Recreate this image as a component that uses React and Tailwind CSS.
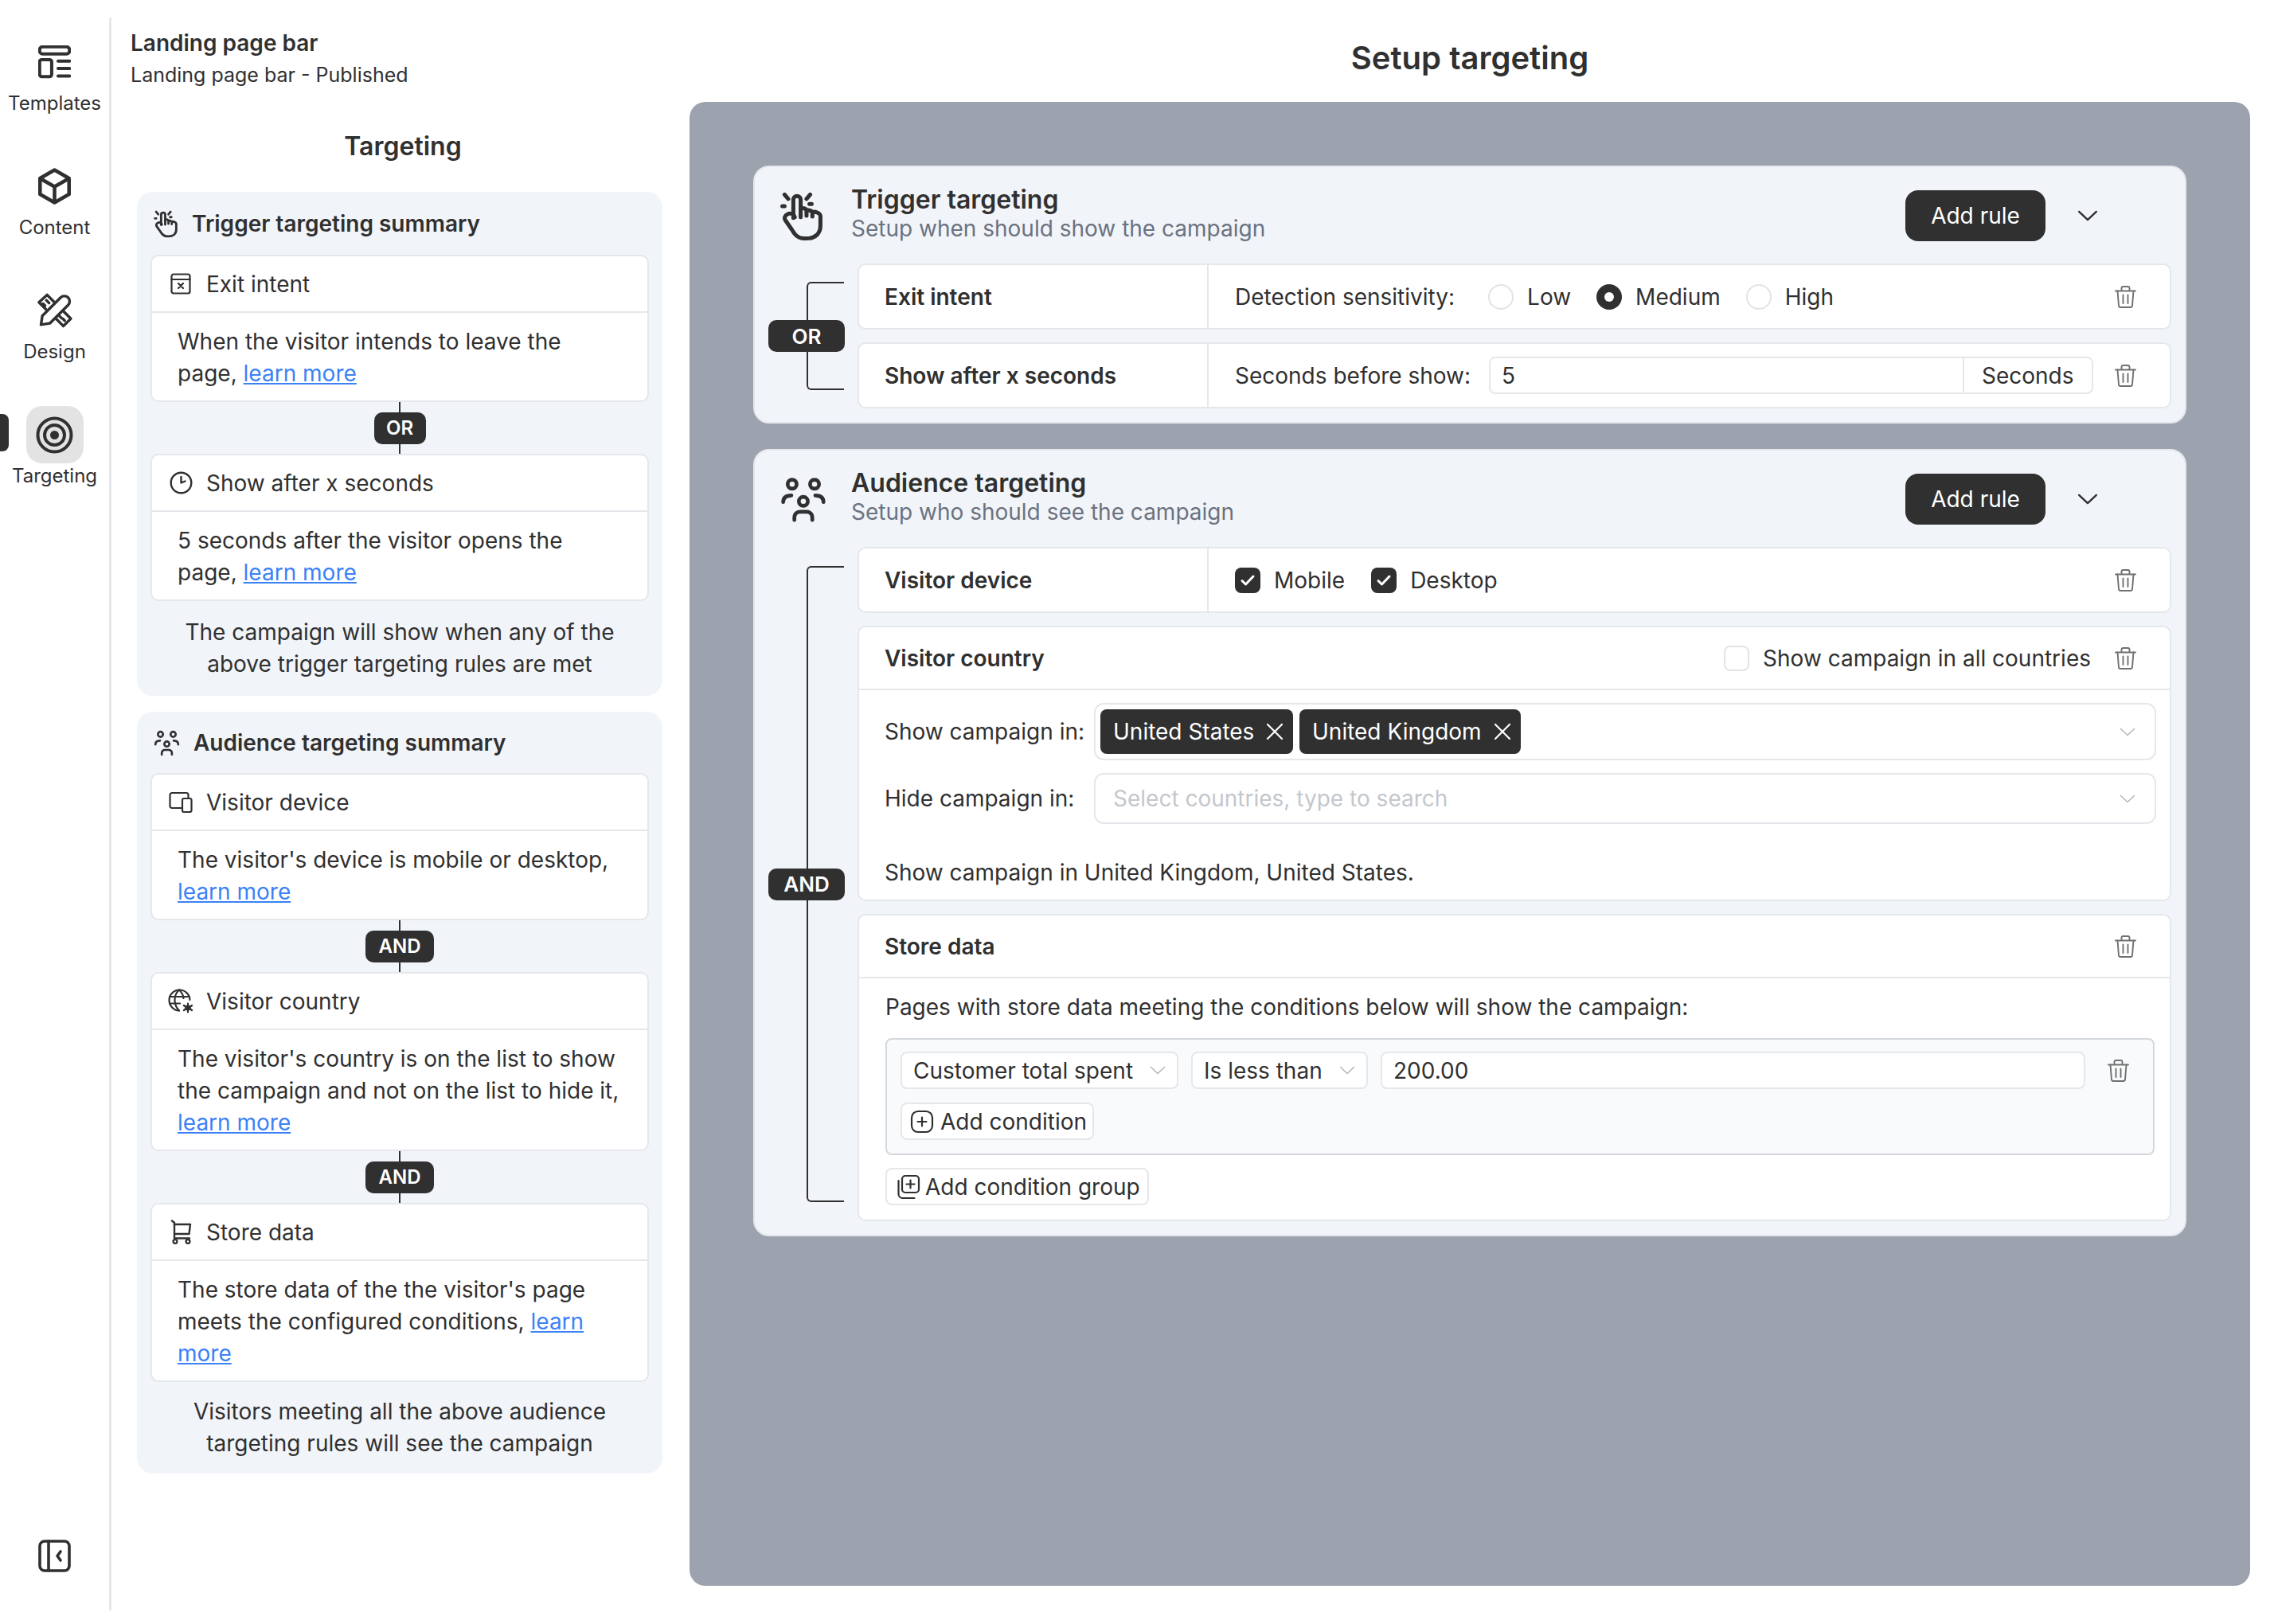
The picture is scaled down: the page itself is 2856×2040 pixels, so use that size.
const Ico = ({ w, h, box, sw = 2, children, className = "" }) => (
  <svg width={w} height={h} viewBox={box} fill="none" stroke="currentColor" strokeWidth={sw} strokeLinecap="round" strokeLinejoin="round" className={`shrink-0 ${className}`}>
    {children}
  </svg>
);

const HandIcon = ({ w, h }) => (
  <Ico w={w} h={h} box="8 8 62 70" sw={5.5}>
    <path d="M28 46V21a5 5 0 0 1 10 0v24" />
    <path d="M38 33c3-1 7 0 8 2v8" />
    <path d="M46 36c3-1 6 0 8 2v6" />
    <path d="M54 38c4-1 10 1 11 5v14c0 11-8 17-19 17h-3c-9 0-13-5-17-12l-9-13c-2-3 0-7 3-8 3-2 7-1 9 2l1 2" />
    <path d="M16 14l5 6M51 14l-5 6M13 30h3M50 27h3" />
  </Ico>
);

const AudienceIcon = ({ w, h }) => (
  <Ico w={w} h={h} box="8 8 64 64" sw={5}>
    <circle cx="26" cy="20" r="6" />
    <circle cx="56" cy="20" r="6" />
    <circle cx="41" cy="43" r="6" />
    <path d="M14 44c0-6 4-9 11-9M68 44c0-6-4-9-11-9M29 68v-3c0-6 4-8 8-8h8c4 0 8 2 8 8v3" />
  </Ico>
);

const TemplatesIcon = () => (
  <Ico w={41} h={42} box="16 15 46 47" sw={4.5}>
    <rect x="18" y="17" width="42" height="10" rx="4" />
    <rect x="18" y="35" width="17" height="24" rx="3" />
    <path d="M44 37h16M44 47.5h16M44 58h16" />
  </Ico>
);

const ContentIcon = () => (
  <Ico w={41} h={46} box="3 2 18 20" sw={2}>
    <path d="M12 3l8 4.6v8.8L12 21l-8-4.6V7.6z" />
    <path d="M4.3 7.8 12 12.2l7.7-4.4M12 12.2V20.5" />
  </Ico>
);

const DesignIcon = () => (
  <Ico w={47} h={46} box="12 12 52 54" sw={4}>
    <path d="M18 60l2-13 27-27c3-3 8-3 11 0s3 8 0 11L31 58z" />
    <path d="M37 26 27 16 15 27l10 10M26 24l4 4M21 29l3 3" />
    <path d="M52 41l10 10-11 11-10-10M50 51l3 3M45 47l3 3" />
  </Ico>
);

const TargetIcon = () => (
  <Ico w={47} h={47} box="0 0 47 47" sw={4}>
    <circle cx="23.5" cy="23.5" r="21" />
    <circle cx="23.5" cy="23.5" r="12.5" />
    <circle cx="23.5" cy="23.5" r="3.5" fill="currentColor" />
  </Ico>
);

const CollapseIcon = () => (
  <Ico w={41} h={41} box="0 0 41 41" sw={3.6}>
    <rect x="2" y="2" width="37" height="37" rx="6" />
    <path d="M13 2v37M28 15l-4 5.5 4 5.5" />
  </Ico>
);

const ExitIcon = () => (
  <Ico w={26} h={27} box="0 0 26 27" sw={2.2}>
    <rect x="1.5" y="1.5" width="23" height="24" rx="2.5" />
    <path d="M1.5 8h23M10 13l6 6M16 13l-6 6" />
  </Ico>
);

const ClockIcon = () => (
  <Ico w={29} h={29} box="0 0 29 29" sw={2.4}>
    <circle cx="14.5" cy="14.5" r="12.8" />
    <path d="M14.5 7v7.5l5-2" />
  </Ico>
);

const DeviceIcon = () => (
  <Ico w={30} h={27} box="0 0 30 27" sw={2.2}>
    <path d="M17 21H4a2.5 2.5 0 0 1-2.5-2.5v-14A2.5 2.5 0 0 1 4 2h18a2.5 2.5 0 0 1 2.5 2.5V8" />
    <rect x="17" y="9" width="11.5" height="17" rx="2" />
  </Ico>
);

const GlobeIcon = () => (
  <Ico w={32} h={31} box="0 0 32 31" sw={2.2}>
    <path d="M27.5 14A13 13 0 1 0 14 27.5" />
    <path d="M14 1.5c-4 3.5-5.5 8-5.5 13s1.5 9 5.5 13M14 1.5c3.5 3 5 6.5 5.5 10.5M2 10h24M2 18.5h13" />
    <circle cx="25" cy="24" r="3.2" fill="currentColor" strokeWidth="1" />
    <path d="M25 18.5v2M25 27.5v2M20 21l2 1.5M28 25.5l2 1.5M20 27l2-1.5M28 22.5l2-1.5" />
  </Ico>
);

const CartIcon = () => (
  <Ico w={27} h={31} box="0 0 27 31" sw={2.4}>
    <path d="M2 1.5l3 2.5v19.5h19" />
    <path d="M5 6h20l-1.5 12H5" />
    <circle cx="6" cy="27.5" r="2.4" />
    <circle cx="22" cy="27.5" r="2.4" />
  </Ico>
);

const TrashIcon = () => (
  <Ico w={27} h={30} box="0 0 27 30" sw={1.9} className="text-[#707070]">
    <path d="M1 7.5h25M8.5 7V4a2 2 0 0 1 2-2h6a2 2 0 0 1 2 2v3" />
    <path d="M3.5 7.5 5 26a2.2 2.2 0 0 0 2.2 2h12.6A2.2 2.2 0 0 0 22 26l1.5-18.5" />
    <path d="M10.5 12.5v10.5M16.5 12.5v10.5" />
  </Ico>
);

const Chevron = ({ w = 20, h = 11, className = "text-[#b5b5b5]", sw = 1.5 }) => (
  <svg width={w} height={h} viewBox="0 0 20 11" fill="none" stroke="currentColor" strokeWidth={sw} strokeLinecap="round" strokeLinejoin="round" className={`shrink-0 ${className}`}>
    <path d="M1.5 1.5 10 9.5l8.5-8" />
  </svg>
);

const CheckBox = ({ on }) =>
  on ? (
    <span className="w-[32px] h-[32px] rounded-[8px] bg-[#303030] flex items-center justify-center shrink-0">
      <svg width="20" height="16" viewBox="0 0 20 16" fill="none" stroke="#fff" strokeWidth="3" strokeLinecap="round" strokeLinejoin="round">
        <path d="M3 8.5 7.5 13 17 3" />
      </svg>
    </span>
  ) : (
    <span className="w-[32px] h-[32px] rounded-[8px] bg-white border-2 border-[#e3e3e3] shrink-0" />
  );

const Radio = ({ on }) =>
  on ? (
    <span className="w-[32px] h-[32px] rounded-full bg-[#303030] flex items-center justify-center shrink-0">
      <span className="w-[12px] h-[12px] rounded-full bg-white" />
    </span>
  ) : (
    <span className="w-[32px] h-[32px] rounded-full bg-white border-2 border-[#e3e3e3] shrink-0" />
  );

const Link = ({ children }) => <a className="text-[#3b82f6] underline">{children}</a>;

const navItems = [
  { label: "Templates", icon: <TemplatesIcon /> },
  { label: "Content", icon: <ContentIcon /> },
  { label: "Design", icon: <DesignIcon /> },
  { label: "Targeting", icon: <TargetIcon />, active: true },
];

const Rail = () => (
  <div className="w-[140px] shrink-0 mt-[22px] h-[2001px] border-r-[3px] border-[#e5e7eb] flex flex-col justify-between pt-[20px] pb-[48px]">
    <div className="flex flex-col gap-[52px]">
      {navItems.map((item) => (
        <div key={item.label} className="relative flex flex-col items-center">
          {item.active && <span className="absolute left-0 top-[10px] w-[11px] h-[47px] rounded-r-[8px] bg-[#303030]" />}
          <div className={`w-[72px] h-[72px] flex items-center justify-center rounded-[20px] ${item.active ? "bg-[#e3e3e3]" : ""}`}>{item.icon}</div>
          <div className="text-[24px] leading-[32px]">{item.label}</div>
        </div>
      ))}
    </div>
    <div className="flex justify-center">
      <CollapseIcon />
    </div>
  </div>
);

const Connector = ({ label, w }) => (
  <div className="h-[65px] flex flex-col items-center">
    <span className="w-[2px] flex-1 bg-[#303030]" />
    <span className={`h-[40px] ${w} rounded-[10px] bg-[#303030] text-white text-[24px] font-semibold flex items-center justify-center`}>{label}</span>
    <span className="w-[2px] flex-1 bg-[#303030]" />
  </div>
);

const SummaryCard = ({ icon, title, children }) => (
  <div className="bg-white border-2 border-[#e5e7eb] rounded-[10px]">
    <div className="h-[71px] border-b-2 border-[#e5e7eb] flex items-center gap-[16px] pl-[20px]">
      <span className="w-[32px] flex justify-center">{icon}</span>
      <span>{title}</span>
    </div>
    <div className="pl-[32px] pr-[30px] pt-[16px] pb-[14px] leading-[40px]">{children}</div>
  </div>
);

const Summaries = () => (
  <div className="w-[726px] shrink-0 pl-[24px]">
    <div className="h-[128px] pt-[34px]">
      <div className="text-[28px] leading-[40px] font-semibold">Landing page bar</div>
      <div className="text-[25px] leading-[40px]">Landing page bar - Published</div>
    </div>
    <div className="w-[668px] ml-[8px] text-center text-[32px] leading-[40px] font-semibold pt-[36px] h-[113px]">Targeting</div>
    <div className="w-[660px] ml-[8px] flex flex-col gap-[20px]">
      <section className="bg-[#f1f4f9] rounded-[20px] px-[17px] pb-[20px]">
        <div className="h-[79px] flex items-center gap-[17px] pl-[3px] font-semibold">
          <HandIcon w={32} h={36} />
          <span>Trigger targeting summary</span>
        </div>
        <SummaryCard icon={<ExitIcon />} title="Exit intent">
          When the visitor intends to leave the page, <Link>learn more</Link>
        </SummaryCard>
        <Connector label="OR" w="w-[65px]" />
        <SummaryCard icon={<ClockIcon />} title="Show after x seconds">
          5 seconds after the visitor opens the page, <Link>learn more</Link>
        </SummaryCard>
        <div className="mt-[19px] text-center leading-[40px]">
          The campaign will show when any of the
          <br />
          above trigger targeting rules are met
        </div>
      </section>
      <section className="bg-[#f1f4f9] rounded-[20px] px-[17px] pb-[18px]">
        <div className="h-[77px] flex items-center gap-[17px] pl-[3px] font-semibold">
          <AudienceIcon w={34} h={34} />
          <span>Audience targeting summary</span>
        </div>
        <SummaryCard icon={<DeviceIcon />} title="Visitor device">
          The visitor's device is mobile or desktop, <Link>learn more</Link>
        </SummaryCard>
        <Connector label="AND" w="w-[86px]" />
        <SummaryCard icon={<GlobeIcon />} title="Visitor country">
          The visitor's country is on the list to show the campaign and not on the list to hide it, <Link>learn more</Link>
        </SummaryCard>
        <Connector label="AND" w="w-[86px]" />
        <SummaryCard icon={<CartIcon />} title="Store data">
          The store data of the the visitor's page meets the configured conditions, <Link>learn more</Link>
        </SummaryCard>
        <div className="mt-[17px] text-center leading-[40px]">
          Visitors meeting all the above audience
          <br />
          targeting rules will see the campaign
        </div>
      </section>
    </div>
  </div>
);

const CardHeader = ({ icon, title, sub }) => (
  <div className="h-[121px] flex items-center pl-[30px] pr-[52px]">
    <span className="w-[91px] shrink-0">{icon}</span>
    <div className="flex-1 pb-[4px]">
      <div className="text-[32px] leading-[36px] font-semibold">{title}</div>
      <div className="leading-[36px] text-[#6b7280]">{sub}</div>
    </div>
    <button className="w-[176px] h-[64px] rounded-[16px] bg-[#303030] text-white text-[28px]">Add rule</button>
    <span className="w-[106px] flex justify-center">
      <Chevron w={26} h={14} className="text-[#303030]" sw={1.9} />
    </span>
  </div>
);

const Bracket = ({ label, y }) => (
  <div className={`relative ml-[65px] mr-[17px] w-[47px] shrink-0 border-2 border-r-0 border-[#303030] rounded-l-[6px] ${y}`}>
    <span className="absolute top-1/2 -translate-y-1/2 -left-[50px] w-[96px] h-[40px] rounded-[10px] bg-[#303030] text-white text-[26px] font-semibold flex items-center justify-center">{label}</span>
  </div>
);

const RuleRow = ({ label, children }) => (
  <div className="h-[83px] bg-white border-2 border-[#e5e7eb] rounded-[10px] flex items-center">
    <div className="w-[439px] h-full shrink-0 border-r-2 border-[#e5e7eb] pl-[32px] flex items-center font-semibold">{label}</div>
    <div className="flex-1 pl-[33px] pr-[42px] flex items-center">{children}</div>
  </div>
);

const SmallSelect = ({ label, w }) => (
  <div className={`h-[47px] ${w} bg-white border-2 border-[#e5e7eb] rounded-[8px] pl-[14px] pr-[14px] flex items-center justify-between`}>
    <span>{label}</span>
    <Chevron w={20} h={11} />
  </div>
);

const Chip = ({ label, w }) => (
  <span className={`h-[56px] ${w} rounded-[8px] bg-[#303030] text-white flex items-center justify-between pl-[16px] pr-[12px]`}>
    {label}
    <svg width="22" height="22" viewBox="0 0 22 22" fill="none" stroke="#fff" strokeWidth="2.2" strokeLinecap="round">
      <path d="M2 2l18 18M20 2 2 20" />
    </svg>
  </span>
);

const MainPanel = () => (
  <div className="w-[1960px] shrink-0">
    <div className="h-[128px] flex items-start justify-center pt-[48px] text-[40px] leading-[50px] font-semibold">Setup targeting</div>
    <div className="h-[1864px] bg-[#9ca2ae] rounded-[20px] px-[80px] pt-[80px] flex flex-col gap-[32px]">
      <div className="bg-[#f1f4f9] border-2 border-[#e5e7eb] rounded-[20px] pr-[17px] pb-[17px]">
        <CardHeader icon={<HandIcon w={57} h={66} />} title="Trigger targeting" sub="Setup when should show the campaign" />
        <div className="flex">
          <Bracket label="OR" y="my-[23px]" />
          <div className="flex-1 flex flex-col gap-[16px]">
            <RuleRow label="Exit intent">
              <span>Detection sensitivity:</span>
              <span className="ml-[42px] flex items-center gap-[17px]">
                <Radio />
                Low
              </span>
              <span className="ml-[32px] flex items-center gap-[17px]">
                <Radio on />
                Medium
              </span>
              <span className="ml-[32px] flex items-center gap-[17px]">
                <Radio />
                High
              </span>
              <span className="ml-auto">
                <TrashIcon />
              </span>
            </RuleRow>
            <RuleRow label="Show after x seconds">
              <span className="w-[319px] shrink-0">Seconds before show:</span>
              <div className="w-[759px] h-[47px] bg-white border-2 border-[#e5e7eb] rounded-[8px] flex items-center">
                <span className="flex-1 pl-[14px]">5</span>
                <span className="w-[162px] h-full border-l-2 border-[#e5e7eb] pl-[22px] flex items-center">Seconds</span>
              </div>
              <span className="ml-auto">
                <TrashIcon />
              </span>
            </RuleRow>
          </div>
        </div>
      </div>
      <div className="bg-[#f1f4f9] border-2 border-[#e5e7eb] rounded-[20px] pr-[17px] pb-[17px]">
        <CardHeader icon={<AudienceIcon w={60} h={60} />} title="Audience targeting" sub="Setup who should see the campaign" />
        <div className="flex">
          <Bracket label="AND" y="my-[24px]" />
          <div className="flex-1 flex flex-col gap-[16px]">
            <RuleRow label="Visitor device">
              <span className="flex items-center gap-[17px]">
                <CheckBox on />
                Mobile
              </span>
              <span className="ml-[33px] flex items-center gap-[17px]">
                <CheckBox on />
                Desktop
              </span>
              <span className="ml-auto">
                <TrashIcon />
              </span>
            </RuleRow>
            <div className="bg-white border-2 border-[#e5e7eb] rounded-[10px]">
              <div className="h-[79px] border-b-2 border-[#e5e7eb] pl-[32px] pr-[42px] flex items-center">
                <span className="font-semibold">Visitor country</span>
                <span className="ml-auto flex items-center gap-[17px]">
                  <CheckBox />
                  Show campaign in all countries
                </span>
                <span className="ml-[30px]">
                  <TrashIcon />
                </span>
              </div>
              <div className="pl-[32px] pr-[17px] pt-[16px] pb-[14px]">
                <div className="flex items-center">
                  <span className="w-[263px] shrink-0">Show campaign in:</span>
                  <div className="flex-1 h-[72px] border-2 border-[#e5e7eb] rounded-[12px] pl-[6px] pr-[24px] flex items-center gap-[8px]">
                    <Chip label="United States" w="w-[242px]" />
                    <Chip label="United Kingdom" w="w-[278px]" />
                    <span className="ml-auto">
                      <Chevron />
                    </span>
                  </div>
                </div>
                <div className="flex items-center mt-[16px]">
                  <span className="w-[263px] shrink-0">Hide campaign in:</span>
                  <div className="flex-1 h-[64px] border-2 border-[#e5e7eb] rounded-[12px] pl-[22px] pr-[24px] flex items-center justify-between">
                    <span className="text-[#c4c7cc]">Select countries, type to search</span>
                    <Chevron />
                  </div>
                </div>
                <div className="mt-[41px] leading-[40px]">Show campaign in United Kingdom, United States.</div>
              </div>
            </div>
            <div className="bg-white border-2 border-[#e5e7eb] rounded-[10px]">
              <div className="h-[79px] border-b-2 border-[#e5e7eb] pl-[32px] pr-[42px] flex items-center justify-between">
                <span className="font-semibold">Store data</span>
                <TrashIcon />
              </div>
              <div className="pl-[33px] pr-[19px] pt-[16px] pb-[18px]">
                <div className="leading-[40px]">Pages with store data meeting the conditions below will show the campaign:</div>
                <div className="mt-[19px] h-[147px] border-2 border-[#d4d7dd] rounded-[8px] bg-[#f9fafb] pl-[17px] pr-[30px] pt-[15px]">
                  <div className="flex items-center gap-[16px]">
                    <SmallSelect label="Customer total spent" w="w-[349px]" />
                    <SmallSelect label="Is less than" w="w-[222px]" />
                    <div className="flex-1 h-[47px] bg-white border-2 border-[#e5e7eb] rounded-[8px] pl-[14px] flex items-center">200.00</div>
                    <span className="ml-[12px]">
                      <TrashIcon />
                    </span>
                  </div>
                  <button className="mt-[17px] h-[47px] w-[243px] bg-white border-2 border-[#e5e7eb] rounded-[8px] pl-[10px] flex items-center gap-[8px]">
                    <Ico w={30} h={30} box="0 0 30 30" sw={2.2}>
                      <rect x="2" y="2" width="26" height="26" rx="8" />
                      <path d="M15 9.5v11M9.5 15h11" />
                    </Ico>
                    Add condition
                  </button>
                </div>
                <button className="mt-[16px] h-[47px] w-[331px] bg-white border-2 border-[#e5e7eb] rounded-[8px] pl-[10px] flex items-center gap-[6px]">
                  <Ico w={32} h={32} box="0 0 32 32" sw={2.2}>
                    <rect x="9" y="2" width="21" height="21" rx="4" />
                    <path d="M19.5 7.5v10M14.5 12.5h10M4.5 8v17a5 5 0 0 0 5 5h15" />
                  </Ico>
                  Add condition group
                </button>
              </div>
            </div>
          </div>
        </div>
      </div>
    </div>
  </div>
);

export default function App() {
  return (
    <div className="w-[2856px] h-[2040px] bg-white overflow-hidden flex [font-family:Inter,sans-serif] text-[28px] text-[#303030]">
      <Rail />
      <Summaries />
      <MainPanel />
    </div>
  );
}
